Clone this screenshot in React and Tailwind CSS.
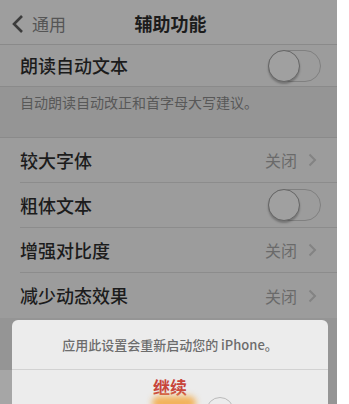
import React from 'react';

const font = { fontFamily: '"Noto Sans CJK SC", "Noto Sans", sans-serif' };

function Toggle() {
  return (
    <div className="relative h-[32px] w-[53px] rounded-full border border-[#808080] bg-[#9c9c9c]">
      <div className="absolute left-[-1px] top-[-1px] h-[32px] w-[32px] rounded-full border border-[#666] bg-[#a0a0a0] shadow-[0_2px_2px_rgba(0,0,0,0.25)]" />
    </div>
  );
}

function Chevron() {
  return (
    <svg width="9" height="14" viewBox="0 0 9 14" className="ml-[11px]">
      <path d="M1.5 1.5 L7 7 L1.5 12.5" fill="none" stroke="#838383" strokeWidth="2" />
    </svg>
  );
}

function Row({ label, right, last }) {
  return (
    <div className="flex h-[45px] items-center pl-[20px]">
      <div className={`flex h-full flex-1 items-center ${right === 'toggle' ? 'pr-[16px]' : 'pr-[20px]'} ${last ? '' : 'border-b border-[#8c8c8c]'}`}>
        <span className="flex-1 text-[18px] font-medium text-[#1c1c1c]">{label}</span>
        {right === 'toggle' ? (
          <Toggle />
        ) : (
          <span className="flex items-center text-[16px] text-[#6a6a6a]">
            {right}
            <Chevron />
          </span>
        )}
      </div>
    </div>
  );
}

export default function App() {
  return (
    <div className="flex h-[404px] w-[349px] overflow-hidden bg-white" style={font}>
      <div className="relative flex w-[337px] flex-col bg-[#959595]">
        <div className="h-[3px] bg-[#9e9e9e]" />
        <div className="relative flex h-[42px] items-center border-b border-[#8a8a8a] bg-[#9e9e9e]">
          <svg width="14" height="20" viewBox="0 0 14 20" className="ml-[11px]">
            <path d="M11 2 L3 10 L11 18" fill="none" stroke="#3c3c3c" strokeWidth="2.6" />
          </svg>
          <span className="ml-[7px] text-[17px] text-[#555]">通用</span>
          <span className="absolute left-0 right-0 top-[7px] text-center text-[18px] font-bold text-[#1c1c1c] pl-[4px]">辅助功能</span>
        </div>
        <div className="flex h-[42px] items-center border-b border-[#8a8a8a] bg-[#9c9c9c] pl-[20px] pr-[16px]">
          <span className="flex-1 text-[18px] font-medium text-[#1c1c1c]">朗读自动文本</span>
          <Toggle />
        </div>
        <div className="h-[50px] pl-[20px] pt-[5px] text-[14px] text-[#585858]">自动朗读自动改正和首字母大写建议。</div>
        <div className="border-t border-[#8a8a8a] bg-[#9c9c9c]">
          <Row label="较大字体" right="关闭" />
          <Row label="粗体文本" right="toggle" />
          <Row label="增强对比度" right="关闭" />
          <Row label="减少动态效果" right="关闭" last />
        </div>
        <div className="absolute bottom-0 left-0 h-[34px] w-[12px] bg-[#a6a6a6]" />
        <div className="absolute left-[12px] top-[320px] h-[100px] w-[316px] rounded-t-[6px] bg-[#ececec]">
          <div className="flex h-[50px] items-center justify-center border-b border-[#d2d2d2] text-[13px] font-medium text-[#6c6c6c]">
            应用此设置会重新启动您的 iPhone。
          </div>
          <div className="relative pt-[4px] text-center text-[17px] font-bold text-[#c8453a]">
            继续
            <div className="absolute left-[140px] top-[26px] h-[14px] w-[44px] rounded-full bg-[#f2b25a] blur-[3px]" />
            <div className="absolute left-[194px] top-[27px] h-[28px] w-[28px] rounded-full border border-[#bbb]" />
          </div>
        </div>
      </div>
    </div>
  );
}
